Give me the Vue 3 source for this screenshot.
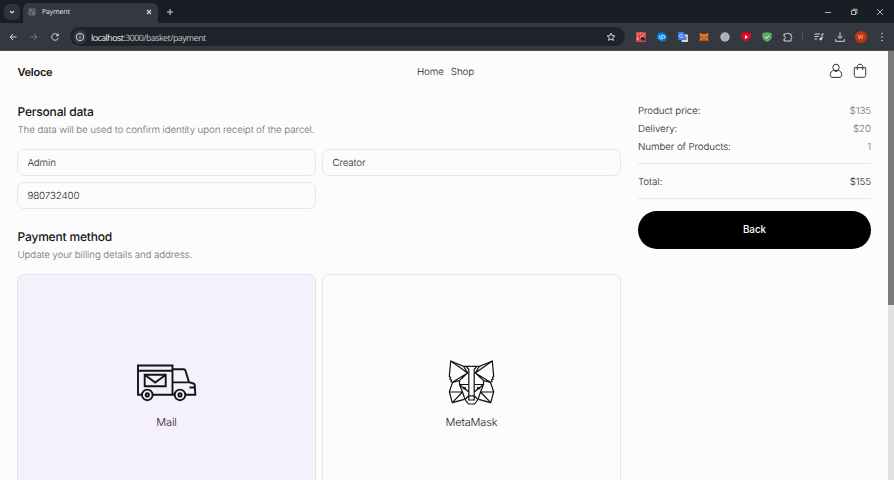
<script setup>
const fields = ['Admin', 'Creator', '980732400']
const summary = [
  { label: 'Product price:', value: '$135' },
  { label: 'Delivery:', value: '$20' },
  { label: 'Number of Products:', value: '1' },
]
const foxSides = ['', 'translate(47 0) scale(-1 1)']
</script>

<template>
  <div class="window">
    <header class="tabs">
      <span class="tab-search">
        <svg width="8" height="8" viewBox="0 0 8 8"><path d="M2 3l2 2 2-2" class="line bold" /></svg>
      </span>
      <div class="tab">
        <svg class="globe" width="10" height="10" viewBox="0 0 10 10">
          <circle cx="5" cy="5" r="4" fill="#6a6e75" />
          <path d="M1.3 4.5c2 0 3 .8 2.8 2.1L5 8.7M5 1.2c-.5 1.5.5 2 1.5 2s.5 1.7 2.2 1.5" fill="none" stroke="#34373f" stroke-width="1" />
        </svg>
        <span class="tab-title">Payment</span>
        <svg class="tab-close" width="8" height="8" viewBox="0 0 8 8"><path d="M2 2l4 4M6 2L2 6" class="line bold" /></svg>
      </div>
      <svg class="new-tab" width="8" height="8" viewBox="0 0 8 8"><path d="M4 1v6M1 4h6" class="line" /></svg>
      <div class="controls">
        <svg width="8" height="8" viewBox="0 0 8 8"><path d="M1 4.500h6" class="line thin" /></svg>
        <svg width="8" height="8" viewBox="0 0 8 8"><path d="M1.500 2.500h4v4h-4zM3 2.300V1.200h4v4H5.800" class="line thin" /></svg>
        <svg width="8" height="8" viewBox="0 0 8 8"><path d="M1 1l6 6M7 1L1 7" class="line thin" /></svg>
      </div>
    </header>

    <div class="toolbar">
      <div class="navs">
        <svg width="10" height="10" viewBox="0 0 10 10"><path d="M8.500 5H2M5 2L2 5l3 3" class="line" /></svg>
        <svg class="dim" width="10" height="10" viewBox="0 0 10 10"><path d="M1.500 5H8M5 2l3 3-3 3" class="line" /></svg>
        <svg width="10" height="10" viewBox="0 0 10 10"><path d="M8 3.500A3.300 3.300 0 1 0 8.200 6M8.300 1.500v2.300H6" class="line" /></svg>
      </div>
      <div class="address">
        <span class="info">
          <svg width="10" height="10" viewBox="0 0 10 10"><circle cx="5" cy="5" r="3.700" class="line" /><path d="M5 4.500v2.300M5 2.700v1" class="line" /></svg>
        </span>
        <span class="url"><b>localhost</b>:3000/basket/payment</span>
        <svg class="star" width="10" height="10" viewBox="0 0 10 10"><path d="M5 1.200l1.100 2.500 2.700.2-2 1.800.6 2.700L5 7 2.600 8.400l.6-2.700-2-1.800 2.700-.2z" class="line" /></svg>
      </div>
      <div class="extensions">
        <svg width="10" height="10" viewBox="0 0 10 10"><rect width="10" height="10" rx="1" fill="#d5493f" /><path d="M1.500 3l1-1.500M4 1.500h1M7 1.500L8.500 3M1.800 5v3" stroke="#f5d5ce" stroke-width=".9" /><path d="M3.500 3.500L4.500 3l1 2 1-1.500.5 2L9 6v2.500H6L3.800 6z" fill="#32201f" /><path d="M4 3.500l.7 2.700M6 3l.5 2" stroke="#fff" stroke-width=".8" /></svg>
        <svg width="10" height="10" viewBox="0 0 10 10"><path d="M5 .2L9 2l1 4-2 3-4 .8L.5 7 0 3 2 .800z" fill="#087de0" /><path d="M7.200 6.500L8 4.500 6 3 3.800 4.300 6.200 6 4 7.200 2 5.500l.8-2" fill="none" stroke="#e7f5ff" stroke-width=".9" /></svg>
        <svg width="10" height="10" viewBox="0 0 10 10"><rect x="3.500" y="2.500" width="6.500" height="7.500" rx=".7" fill="#d8dce1" /><path d="M0 0h5.800l2.200 8H.8L0 7z" fill="#3f7de8" /><path d="M4.500 2.800A1.700 1.700 0 1 0 4.900 4.300H3.500" fill="none" stroke="#dceaff" stroke-width=".7" /><path d="M7 5h2.500M8.200 4v1M9 5L7.500 8M7.500 6l1.500 2" stroke="#65717d" stroke-width=".6" fill="none" /></svg>
        <svg width="10" height="10" viewBox="0 0 10 10"><path d="M.5.800L4 2h2L9.500.800 9 5l.5 4-2.700-.5L5 9l-1.800-.5L.5 9 1 5z" fill="#df7620" /><path d="M2 5l2 .7M8 5l-2 .7M4 8h2" stroke="#5b3828" stroke-width=".9" /></svg>
        <svg width="10" height="10" viewBox="0 0 10 10"><circle cx="5" cy="5" r="4.700" fill="#b6b7b9" /><path d="M4 1v8M6 1v8" stroke="#96979a" stroke-width=".5" /></svg>
        <svg width="10" height="10" viewBox="0 0 10 10"><path d="M0 1l5-.7L10 1v4.300L5 10 0 5.300z" fill="#e50920" /><path d="M4 3l3 2-3 2z" fill="#fff" /></svg>
        <svg width="10" height="10" viewBox="0 0 10 10"><path d="M.3 1L5 .2 9.700 1v4c0 2-2 3.700-4.700 5C2.300 8.700.3 7 .3 5z" fill="#58aa62" /><path d="M3 4.800l1.700 1.500L7.200 3.500" fill="none" stroke="#d7f0d8" stroke-width="1.100" /></svg>
        <svg width="10" height="10" viewBox="0 0 10 10"><path d="M1 2h2.600a1.200 1.200 0 0 1 2.300 0H8v2.300a1.200 1.200 0 0 1 0 2.300V9H1V6.800c2 0 2-2.500 0-2.500z" class="line" /></svg>
      </div>
      <span class="divider"></span>
      <div class="tools">
        <svg width="10" height="10" viewBox="0 0 10 10"><path d="M.5 2h5.500M.5 4.500h4M.5 7h2.500M8 7V2h1.800" class="line" /><circle cx="6.800" cy="7" r="1.400" fill="#d5d7da" /></svg>
        <svg width="10" height="10" viewBox="0 0 10 10"><path d="M5 .5v5.700M2.500 4L5 6.500 7.500 4M.7 7v2.300h8.600V7" class="line" /></svg>
      </div>
      <span class="avatar">W</span>
      <svg class="menu" width="4" height="10" viewBox="0 0 4 10"><g fill="#d5d7da"><circle cx="2" cy="1.500" r=".8" /><circle cx="2" cy="5" r=".8" /><circle cx="2" cy="8.500" r=".8" /></g></svg>
    </div>

    <div class="viewport">
      <div class="page">
        <nav class="site-nav">
          <strong class="brand">Veloce</strong>
          <div class="links"><a>Home</a><a>Shop</a></div>
          <div class="actions">
            <svg width="14" height="16" viewBox="0 0 14 16"><circle cx="7" cy="4.400" r="3.200" /><path d="M4.700 7.300C2.500 8 1.300 9.400 1.300 11.700c0 2 .8 2.700 2.700 2.700h6c1.900 0 2.700-.7 2.700-2.700 0-2.300-1.200-3.700-3.400-4.400L7 8.700z" /></svg>
            <svg width="14" height="16" viewBox="0 0 14 16"><path d="M1.300 4.700h11.400v7.600c0 1.400-.6 2-2 2H3.300c-1.400 0-2-.6-2-2zM4.300 7V3.500c0-3 5.400-3 5.400 0V7" /></svg>
          </div>
        </nav>
        <div class="checkout">
          <main class="main">
            <section>
              <h2>Personal data</h2>
              <p class="hint">The data will be used to confirm identity upon receipt of the parcel.</p>
              <div class="grid">
                <div v-for="field in fields" :key="field" class="field">{{ field }}</div>
              </div>
            </section>
            <section class="payment">
              <h2>Payment method</h2>
              <p class="hint">Update your billing details and address.</p>
              <div class="grid">
                <div class="method selected">
                  <svg width="61" height="38" viewBox="0 0 61 38" class="truck">
                    <path d="M5.500 30.700H2V1.500h34.500v29.200H17M2 6.800h34.500M36.500 5.200h11q1.500 0 2 1.500l3.500 11.500 4.500 1.300q1.300.5 1.300 2l.5 9.200h-9.500M36.500 18.400h16M38.500 30.700h-2M53.500 23.500h5" />
                    <path d="M8.700 10.700h21v11.600h-21zM9 11l10.200 7.500L29.500 11" />
                    <circle cx="11.300" cy="30.900" r="5.300" /><circle cx="11.300" cy="30.900" r="1.600" />
                    <circle cx="44" cy="30.900" r="5.300" /><circle cx="44" cy="30.900" r="1.600" />
                  </svg>
                  <span>Mail</span>
                </div>
                <div class="method">
                  <svg width="47" height="46" viewBox="0 0 47 46" class="fox">
                    <g v-for="side in foxSides" :key="side" :transform="side">
                      <path d="M23.500 6.300H15.500L2.700 1 1.300 16.500 2.700 17.500 1.800 19l1.700 1-.5 1.500 1.500 1L1.300 31.700l3 11 12-3.400" />
                      <path d="M2.700 1L19.700 13 4.500 22.300M15.500 6.300L19.700 13 11.500 20.500 4.500 22.300M18 6.300l2.800 3v26.500h2.700M11.500 20.500v4h9M1.300 32h13.200M11.500 24.500l3 7.500L4.300 42.700M11.500 24.500l9.300 7.500M14.500 32l2.500 7.500 3.500 4.500h3M20.800 35.800L17 39.500M20.800 35.800v4.200h2.700" />
                      <path d="M14 29l3.500-2.500 1 3z" class="eye" />
                    </g>
                  </svg>
                  <span>MetaMask</span>
                </div>
              </div>
            </section>
          </main>
          <aside class="summary">
            <div class="rows">
              <div v-for="item in summary" :key="item.label" class="row"><span>{{ item.label }}</span><span class="muted">{{ item.value }}</span></div>
            </div>
            <div class="row total"><span>Total:</span><span>$155</span></div>
            <button class="back">Back</button>
          </aside>
        </div>
      </div>
      <div class="scrollbar"><div class="thumb"></div></div>
    </div>
  </div>
</template>

<style>
body { margin: 0; overflow: hidden; }
</style>

<style scoped>
* { box-sizing: border-box; }
.window { width: 894px; height: 480px; overflow: hidden; background: #fcfcfc; font-family: Inter, sans-serif; font-weight: 300; color: #1c1c1c; text-rendering: geometricPrecision; }
svg { display: block; flex: none; }
.line { fill: none; stroke: #d5d7da; stroke-width: 1; }
.bold { stroke-width: 1.2; }
.thin { stroke-width: .8; }
.tabs { height: 23px; background: #191d24; display: flex; align-items: center; padding-left: 4px; }
.tab-search { width: 16px; height: 16px; border-radius: 5px; background: #2e323a; display: grid; place-items: center; }
.tab { width: 135px; height: 20px; margin: 3px 0 0 3px; padding: 0 5px 0 4px; background: #343840; border-radius: 6px 6px 0 0; display: flex; align-items: center; }
.tab svg { margin-top: -2px; }
.tab-title { font: 7px/10px "Open Sans", sans-serif; letter-spacing: -.15px; color: #e4e5e7; margin-left: 5px; }
.tab .tab-close { margin-left: auto; }
.new-tab { margin-left: 8px; }
.controls { margin-left: auto; padding-right: 10px; display: flex; gap: 18px; }
.toolbar { height: 28px; background: #343840; border-bottom: 1px solid #4a4d54; display: flex; align-items: center; }
.navs { display: flex; gap: 11px; margin-left: 8px; }
.dim { opacity: .4; }
.address { width: 555px; height: 19px; margin-left: 10px; border-radius: 10px; background: #1f242b; display: flex; align-items: center; padding: 0 9px 0 3px; }
.info { width: 14px; height: 14px; border-radius: 50%; background: #343840; display: grid; place-items: center; }
.url { font: 8.800px/12px "Open Sans", sans-serif; letter-spacing: -.500px; padding-top: 2px; color: #c3c6ca; margin-left: 4px; }
.url b { font-weight: 400; color: #f0f1f2; }
.star { margin-left: auto; }
.extensions { display: flex; gap: 11px; margin-left: 10.500px; }
.divider { width: 1px; height: 8px; background: #555961; margin-left: 9px; }
.tools { display: flex; gap: 11px; margin-left: 11px; }
.avatar { width: 12px; height: 12px; border-radius: 50%; background: #bd3510; color: #f6d9cf; font: 6px/12px "Open Sans", sans-serif; text-align: center; margin-left: 10px; }
.menu { margin-left: 13px; }
.viewport { height: 429px; display: flex; }
.page { width: 888px; padding: 0 17px; overflow: hidden; }
.site-nav { height: 42px; display: grid; grid-template-columns: 1fr auto 1fr; align-items: center; padding-right: 4px; }
.brand { font-size: 11px; font-weight: 600; letter-spacing: -.250px; line-height: 14px; padding-left: .5px; color: #151515; }
.links { display: flex; gap: 7px; font-size: 9.800px; letter-spacing: -.1px; line-height: 14px; padding: 2px 0 0 7px; }
.actions { display: flex; gap: 10px; justify-content: flex-end; margin-top: -2px; }
.actions svg { fill: none; stroke: #333; stroke-width: 1; }
.checkout { display: flex; gap: 17px; }
.main { width: 604px; padding-top: 11px; }
h2 { margin: 0; padding-left: .5px; font-size: 12px; font-weight: 500; letter-spacing: -.180px; line-height: 16px; color: #151515; }
.hint { margin: 4px 0 0; padding-left: .5px; font-size: 9.800px; letter-spacing: -.120px; line-height: 14px; color: #707070; }
.grid { display: grid; grid-template-columns: 299px 299px; gap: 6px; margin-top: 11px; }
.field { height: 27px; border: 1px solid #e7e7e7; border-radius: 7px; padding-left: 9.400px; font-size: 9.800px; letter-spacing: -.120px; line-height: 27px; }
.payment { margin-top: 20px; }
.method { height: 240px; border: 1px solid #e7e7e7; border-radius: 7px; display: flex; flex-direction: column; align-items: center; padding-top: 85px; font-size: 11px; letter-spacing: -.15px; line-height: 16px; }
.selected { background: #f4f1fc; border-color: #e6dfec; }
.truck { fill: none; stroke: #121512; stroke-width: 1.900; margin: 4px 0 12px; }
.fox { fill: none; stroke: #111; stroke-width: 1.200; margin-bottom: 8px; }
.eye { fill: #111; stroke: none; }
.summary { width: 233px; padding-top: 12px; font-size: 9.800px; letter-spacing: -.1px; line-height: 14px; }
.rows { display: flex; flex-direction: column; gap: 4px; padding-bottom: 8px; border-bottom: 1px solid #e7e7e7; }
.row { display: flex; justify-content: space-between; }
.muted { color: #707070; }
.total { padding: 12px 0 8px; border-bottom: 1px solid #e7e7e7; }
.back { display: block; width: 233px; height: 38px; margin-top: 12px; padding: 0; border: 0; border-radius: 19px; background: #000; color: #fff; font: 500 9.800px/14px Inter, sans-serif; }
.scrollbar { width: 6px; background: #e1e1e1; }
.thumb { height: 254px; background: #7b7b7b; }
</style>
